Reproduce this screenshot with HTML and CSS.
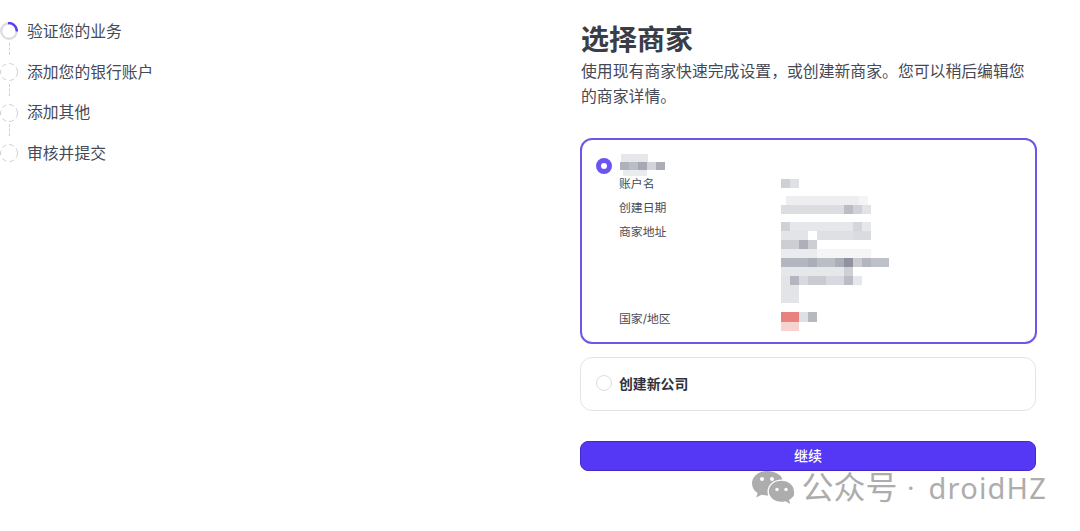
FILE: index.html
```html
<!DOCTYPE html>
<html lang="zh-CN">
<head>
  <meta charset="UTF-8" />
  <meta name="viewport" content="width=device-width, initial-scale=1.0"/>
  <title>选择商家</title>
  <link rel="stylesheet" href="styles.css">
</head>
<body>

  <div class="page">
    <ul class="steps">
      <li class="step">
        <svg class="step-icon" viewBox="0 0 18 18" width="18" height="18">
          <circle cx="9" cy="9" r="7.800" fill="none" stroke="#dcdde3" stroke-width="2.400"/>
          <path d="M8 1.200a7.800 7.800 0 0 1 8.800 8.300" fill="none" stroke="#5a3ff0" stroke-width="2.400"/>
        </svg>
        <span>验证您的业务</span>
      </li>
      <li class="step">
        <svg class="step-icon" viewBox="0 0 18 18" width="18" height="18">
          <circle cx="9" cy="9" r="8.500" fill="none" stroke="#cfd0d6" stroke-dasharray="5 3"/>
        </svg>
        <span>添加您的银行账户</span>
      </li>
      <li class="step">
        <svg class="step-icon" viewBox="0 0 18 18" width="18" height="18">
          <circle cx="9" cy="9" r="8.500" fill="none" stroke="#cfd0d6" stroke-dasharray="5 3"/>
        </svg>
        <span>添加其他</span>
      </li>
      <li class="step">
        <svg class="step-icon" viewBox="0 0 18 18" width="18" height="18">
          <circle cx="9" cy="9" r="8.500" fill="none" stroke="#cfd0d6" stroke-dasharray="5 3"/>
        </svg>
        <span>审核并提交</span>
      </li>
    </ul>

    <main class="panel">
      <h1>选择商家</h1>
      <p class="desc">使用现有商家快速完成设置，或创建新商家。您可以稍后编辑您的商家详情。</p>

      <div class="card card-selected">
        <div class="card-head">
          <span class="radio radio-on"></span>
          <svg class="mosaic" width="46" height="24" viewBox="0 0 46 24">
            <rect x="1" y="0" width="27" height="8" fill="#e6e7ea"/>
            <rect x="0" y="8" width="9" height="8" fill="#b0b2bb"/>
            <rect x="9" y="8" width="9" height="8" fill="#bbbdc5"/>
            <rect x="18" y="8" width="9" height="8" fill="#a6a8b2"/>
            <rect x="27" y="8" width="9" height="8" fill="#d3d4d9"/>
            <rect x="36" y="8" width="9" height="8" fill="#acaeb7"/>
            <rect x="3" y="16" width="24" height="6" fill="#eaebee"/>
          </svg>
        </div>
        <div class="details">
          <span class="label">账户名</span>
          <svg class="mosaic mosaic-account" width="18" height="9" viewBox="0 0 18 9">
            <rect width="9" height="9" fill="#cfd0d6"/>
            <rect x="9" width="9" height="9" fill="#dfe0e4"/>
          </svg>

          <span class="label">创建日期</span>
          <svg class="mosaic mosaic-date" width="90" height="20" viewBox="0 0 90 20">
            <rect x="5" width="73" height="9" fill="#eeeef1"/>
            <rect x="78" width="9" height="9" fill="#f5f5f7"/>
            <rect y="9" width="63" height="9" fill="#dcdde1"/>
            <rect x="63" y="9" width="9" height="9" fill="#bbbdc5"/>
            <rect x="72" y="9" width="9" height="9" fill="#d0d1d6"/>
            <rect x="81" y="9" width="9" height="9" fill="#e2e3e7"/>
          </svg>

          <span class="label">商家地址</span>
          <svg class="mosaic mosaic-address" width="110" height="81" viewBox="0 0 110 81">
            <rect width="9" height="9" fill="#d0d1d6"/>
            <rect x="9" width="63" height="9" fill="#e6e7ea"/>
            <rect x="72" width="9" height="9" fill="#d5d6db"/>
            <rect x="81" width="9" height="9" fill="#e6e7ea"/>
            <rect y="9" width="27" height="9" fill="#e3e4e8"/>
            <rect x="36" y="9" width="36" height="9" fill="#dfe0e4"/>
            <rect x="72" y="9" width="18" height="9" fill="#dadbe0"/>
            <rect y="18" width="18" height="9" fill="#cdced4"/>
            <rect x="18" y="18" width="9" height="9" fill="#aeb0b9"/>
            <rect x="27" y="18" width="9" height="9" fill="#cdced4"/>
            <rect y="27" width="36" height="9" fill="#eaebee"/>
            <rect x="36" y="27" width="54" height="9" fill="#f5f5f7"/>
            <rect y="36" width="27" height="9" fill="#b4b6bf"/>
            <rect x="27" y="36" width="9" height="9" fill="#acaeb7"/>
            <rect x="36" y="36" width="18" height="9" fill="#bbbdc5"/>
            <rect x="54" y="36" width="9" height="9" fill="#acaeb7"/>
            <rect x="63" y="36" width="9" height="9" fill="#9092a0"/>
            <rect x="72" y="36" width="9" height="9" fill="#cacbd1"/>
            <rect x="81" y="36" width="9" height="9" fill="#b4b6bf"/>
            <rect x="90" y="36" width="18" height="9" fill="#bfc1c8"/>
            <rect y="45" width="63" height="9" fill="#e6e7ea"/>
            <rect x="63" y="45" width="9" height="9" fill="#cfd0d6"/>
            <rect y="54" width="9" height="9" fill="#e3e4e8"/>
            <rect x="9" y="54" width="9" height="9" fill="#b4b6bf"/>
            <rect x="18" y="54" width="9" height="9" fill="#d8d9de"/>
            <rect x="27" y="54" width="18" height="9" fill="#cacbd1"/>
            <rect x="45" y="54" width="18" height="9" fill="#d8d9de"/>
            <rect x="63" y="54" width="9" height="9" fill="#bbbdc5"/>
            <rect x="72" y="54" width="9" height="9" fill="#e6e7ea"/>
            <rect y="63" width="18" height="18" fill="#e3e4e8"/>
          </svg>

          <span class="label">国家/地区</span>
          <svg class="mosaic mosaic-country" width="37" height="19" viewBox="0 0 37 19">
            <rect width="18" height="10" fill="#e8827c"/>
            <rect y="10" width="18" height="9" fill="#f6d2d0"/>
            <rect x="18" width="9" height="10" fill="#dfe0e4"/>
            <rect x="27" width="9" height="10" fill="#b6b9c0"/>
          </svg>
        </div>
      </div>

      <div class="card card-new">
        <span class="radio"></span>
        <strong>创建新公司</strong>
      </div>

      <button class="continue">继续</button>
    </main>
  </div>

  <div class="watermark">
    <svg width="42" height="34" viewBox="0 0 42 34">
      <path d="M15 0C6.700 0 0 5.500 0 12.400c0 3.900 2.200 7.300 5.600 9.600L4.200 26.500l5.300-2.800c1.700.5 3.600.8 5.500.8h1.200c-.5-1.300-.7-2.700-.7-4.100 0-6.600 6.300-11.900 14-11.900h1C29.300 3.600 22.800 0 15 0z" fill="#adadad"/>
      <path d="M42 20.300c0-5.800-5.600-10.500-12.600-10.500s-12.600 4.700-12.600 10.500 5.600 10.500 12.600 10.500c1.400 0 2.800-.2 4.100-.6l4.700 2.800-1.200-4.200c3.700-2 6-5 6-8.500z" fill="#adadad"/>
      <circle cx="10" cy="8" r="2" fill="#fff"/>
      <circle cx="20" cy="8" r="2" fill="#fff"/>
      <circle cx="25" cy="18.500" r="1.700" fill="#fff"/>
      <circle cx="34" cy="18.500" r="1.700" fill="#fff"/>
    </svg>
    <span class="wm-cn">公众号</span>
    <span class="wm-dot">·</span>
    <span class="wm-en">droidHZ</span>
  </div>

</body>
</html>
```

FILE: styles.css
```css
* {
  box-sizing: border-box;
}
body {
  margin: 0;
  height: 531px;
  overflow: hidden;
  position: relative;
  background: white;
  color: #3c4150;
  font-family: Inter, "Noto Sans CJK SC", sans-serif;
}
.page {
  display: grid;
  grid-template-columns: 580px 457px;
}

.steps {
  list-style: none;
  margin: 0;
  padding: 11px 0 0;
}
.step {
  position: relative;
  display: flex;
  align-items: center;
  gap: 9px;
  height: 40.7px;
  font-size: 15.8px;
  color: #454955;
}
.step span {
  padding-bottom: 2px;
}
.step:not(:last-child)::after {
  content: "";
  position: absolute;
  left: 9px;
  top: 32px;
  height: 12px;
  border-left: 1px dashed #cfd0d6;
}

.panel {
  padding-top: 21px;
}
.panel h1 {
  margin: 0 0 0 1px;
  font-size: 28px;
  line-height: 39px;
  font-weight: 600;
  color: #3a3c46;
}
.desc {
  margin: 0 0 29px 1px;
  font-size: 15.85px;
  line-height: 24.5px;
  color: #454956;
}

.card {
  background: white;
  border-radius: 12px;
}
.card-selected {
  height: 206px;
  padding: 14px 14px 0;
  border: 2px solid #6a58e6;
}
.card-head {
  display: flex;
  align-items: center;
  gap: 8px;
  height: 24px;
}
.radio {
  flex: none;
  width: 16px;
  height: 16px;
  border-radius: 50%;
  border: 1px solid #dcdde2;
  background: white;
}
.radio-on {
  border: 5px solid #6a55f2;
}
.details {
  display: grid;
  grid-template-columns: 162px 1fr;
  grid-template-rows: 24px 24px 87px 24px;
  padding-left: 23px;
  margin-top: -5px;
  font-size: 11.85px;
}
.label {
  line-height: 22px;
  color: #474b58;
}
.mosaic {
  display: block;
}
.mosaic-account {
  margin-top: 6px;
}
.mosaic-date {
  margin-top: -1px;
}
.mosaic-address {
  margin-top: 1px;
}
.mosaic-country {
  margin-top: 4px;
}

.card-new {
  display: flex;
  align-items: center;
  gap: 7px;
  height: 54px;
  margin-top: 13px;
  margin-right: 1px;
  padding: 0 0 2px 15px;
  border: 1px solid #e2e3e7;
}
.card-new strong {
  font-size: 13.85px;
  font-weight: 600;
  color: #30323b;
}

.continue {
  display: block;
  width: 456px;
  height: 30px;
  margin-top: 30px;
  padding: 0 0 2px;
  border: 1px solid #4429c9;
  border-radius: 8px;
  background: #5438f6;
  color: white;
  font: 500 14px Inter, "Noto Sans CJK SC", sans-serif;
}

.watermark {
  position: absolute;
  left: 752px;
  top: 470px;
  display: flex;
  align-items: center;
  color: #adadad;
  line-height: 36px;
  white-space: nowrap;
}
.wm-cn {
  margin-left: 7.5px;
  font-size: 32px;
}
.wm-dot {
  margin-left: 9.5px;
  font-size: 26px;
}
.wm-en {
  margin-left: 14px;
  font-size: 29px;
  letter-spacing: 1.2px;
  font-family: "Noto Sans", sans-serif;
}
```
